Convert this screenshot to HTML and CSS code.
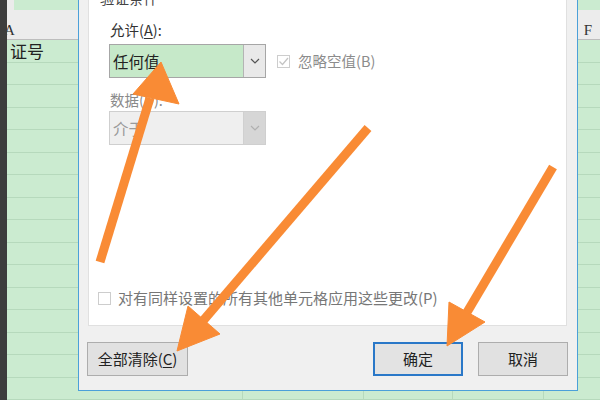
FILE: index.html
```html
<!DOCTYPE html>
<html lang="zh-CN">
<head>
<meta charset="utf-8">
<title>数据验证</title>
<link rel="stylesheet" href="styles.css">
</head>
<body>
<div class="screen">
  <div class="strip"></div>
  <div class="sheet">
    <div class="topbar"><span class="tb-gray"></span><span class="tb-green"></span></div>
    <div class="colhead"><span class="col-a">A</span><span class="col-f">F</span></div>
    <div class="rows">
      <div class="row"><span class="cell-text">证号</span></div>
      <div class="row"></div><div class="row"></div><div class="row"></div>
      <div class="row"></div><div class="row"></div><div class="row"></div>
      <div class="row"></div><div class="row"></div><div class="row"></div>
      <div class="row"></div><div class="row"></div><div class="row"></div>
      <div class="row"></div><div class="row"></div><div class="row"></div>
    </div>
  </div>

  <div class="dialog">
    <div class="panel">
      <div class="group-title">验证条件</div>
      <div class="field-label">允许(<u>A</u>):</div>
      <div class="field-row">
        <div class="select select-active">
          <span class="select-value">任何值</span>
          <span class="select-btn"><svg width="10" height="6" viewBox="0 0 10 6"><polyline points="1,1 5,5 9,1" fill="none" stroke="#555" stroke-width="1.2"/></svg></span>
        </div>
        <label class="check check-disabled">
          <span class="box"><svg width="13" height="13" viewBox="0 0 13 13"><polyline points="2.5,6.5 5.5,9.5 11,3" fill="none" stroke="#c4c4c4" stroke-width="1.3"/></svg></span>
          <span class="check-text">忽略空值(B)</span>
        </label>
      </div>
      <div class="field-label field-label-dim">数据(D):</div>
      <div class="select select-disabled">
        <span class="select-value">介于</span>
        <span class="select-btn"><svg width="10" height="6" viewBox="0 0 10 6"><polyline points="1,1 5,5 9,1" fill="none" stroke="#b0b0b0" stroke-width="1.2"/></svg></span>
      </div>
      <label class="check check-bottom">
        <span class="box"></span>
        <span class="check-text">对有同样设置的所有其他单元格应用这些更改(P)</span>
      </label>
    </div>
    <div class="buttons">
      <button class="btn btn-clear">全部清除(<u>C</u>)</button>
      <span class="spacer"></span>
      <button class="btn btn-default">确定</button>
      <button class="btn btn-cancel">取消</button>
    </div>
  </div>

  <svg class="arrows" width="600" height="400" viewBox="0 0 600 400">
    <g fill="#f98b35" stroke="#f98b35">
      <line x1="100" y1="262" x2="150" y2="98" stroke-width="9"/>
      <polygon points="161,62 133,94 179,104" stroke-width="1"/>
      <line x1="368" y1="128" x2="202" y2="322" stroke-width="9"/>
      <polygon points="177,351 188,306 220,334" stroke-width="1"/>
      <line x1="553" y1="167" x2="466" y2="314" stroke-width="9"/>
      <polygon points="447,346 449,302 485,322" stroke-width="1"/>
    </g>
  </svg>
</div>
</body>
</html>
```
FILE: styles.css
```css
html, body {
  margin: 0;
  padding: 0;
}
body {
  width: 600px;
  height: 400px;
  overflow: hidden;
  background: #cbebd0;
}
.screen {
  position: relative;
  width: 600px;
  height: 400px;
  display: flex;
  overflow: hidden;
}
.strip {
  width: 7px;
  flex: none;
  background: #3d3d3d;
}
.sheet {
  flex: 1;
  display: flex;
  flex-direction: column;
  background: #cbebd0;
}
.topbar {
  height: 10px;
  display: flex;
}
.tb-gray {
  width: 7px;
  background: #ebebeb;
}
.tb-green {
  flex: 1;
  background: #cbebd0;
}
.colhead {
  height: 29px;
  background: #ececec;
  border-bottom: 1px solid #bdbdbd;
  display: flex;
  justify-content: space-between;
  align-items: center;
  font-family: "Liberation Serif", serif;
  font-size: 15px;
  color: #333;
  overflow: hidden;
}
.col-a {
  margin-left: -3px;
  padding-top: 12px;
}
.col-f {
  margin-right: 8px;
  padding-top: 12px;
}
.rows {
  flex: 1;
  background-color: #cbebd0;
  background-image:
    linear-gradient(to right, transparent 235px, #b6d9bc 235px, #b6d9bc 236px, transparent 236px),
    linear-gradient(to right, transparent 356px, #b6d9bc 356px, #b6d9bc 357px, transparent 357px),
    linear-gradient(to right, transparent 445px, #b6d9bc 445px, #b6d9bc 446px, transparent 446px),
    linear-gradient(to right, transparent 536px, #b6d9bc 536px, #b6d9bc 537px, transparent 537px);
}
.row {
  height: 21.5px;
  border-bottom: 1px solid #b6d9bc;
  display: flex;
  align-items: center;
}
.cell-text {
  margin-left: 3px;
  font-family: "Noto Sans CJK SC", sans-serif;
  font-size: 17px;
  line-height: 20px;
  color: #222;
}

/* dialog */
.dialog {
  position: absolute;
  left: 78px;
  top: -1px;
  width: 500px;
  height: 392px;
  box-sizing: border-box;
  border: 1px solid #4ba0d9;
  background: #f0f0f0;
  padding: 0 10px 0 9px;
  display: flex;
  flex-direction: column;
  font-family: "Noto Sans CJK SC", sans-serif;
  font-size: 14.5px;
  color: #333;
}
.panel {
  height: 326px;
  box-sizing: border-box;
  background: #fff;
  border: 1px solid #e0e0e0;
  border-top: none;
  display: flex;
  flex-direction: column;
}
.group-title {
  margin-top: -12px;
  margin-left: 11px;
  line-height: 20px;
  height: 20px;
  color: #444;
}
.field-label {
  margin-top: 12px;
  margin-left: 21px;
  line-height: 20px;
  height: 20px;
  color: #333;
}
.field-label u, .btn u {
  text-decoration: underline;
  text-underline-offset: 2px;
}
.field-label-dim {
  color: #8a8a8a;
  margin-top: 12px;
}
.field-row {
  margin-top: 4px;
  display: flex;
  align-items: center;
}
.select {
  margin-left: 20px;
  width: 157px;
  height: 34px;
  box-sizing: border-box;
  display: flex;
  flex: none;
}
.select-active {
  border: 1px solid #a6a6a6;
  background: #c6e9c9;
}
.select-disabled {
  margin-top: 1px;
  border: 1px solid #cfcfcf;
  background: #efefef;
}
.select-value {
  flex: 1;
  padding-left: 3px;
  line-height: 32px;
  font-size: 15.5px;
  color: #222;
}
.select-disabled .select-value {
  color: #9a9a9a;
}
.select-btn {
  width: 21px;
  display: flex;
  align-items: center;
  justify-content: center;
  border-left: 1px solid #b4b4b4;
  background: #e9e9e9;
}
.select-disabled .select-btn {
  border-left: 1px solid #d0d0d0;
  background: #d6d6d6;
}
.check {
  display: flex;
  align-items: center;
}
.box {
  width: 13px;
  height: 13px;
  box-sizing: border-box;
  border: 1px solid #cdcdcd;
  background: #fff;
  display: flex;
  flex: none;
}
.box svg {
  margin: -1px;
}
.check-disabled {
  margin-left: 11px;
}
.check-text {
  margin-left: 8px;
  line-height: 20px;
  color: #8c8c8c;
}
.check-bottom {
  margin-top: auto;
  margin-bottom: 17px;
  margin-left: 9px;
}
.check-bottom .check-text {
  margin-left: 7px;
  color: #777;
  font-size: 15px;
}

.buttons {
  margin-top: 16px;
  height: 34px;
  display: flex;
  margin-left: -1px;
  margin-right: -1px;
}
.spacer {
  flex: 1;
}
.btn {
  font-family: "Noto Sans CJK SC", sans-serif;
  font-size: 15px;
  color: #222;
  height: 34px;
  box-sizing: border-box;
  border: 1px solid #adadad;
  background: #e1e1e1;
  padding: 0;
  line-height: 30px;
}
.btn-clear {
  width: 101px;
}
.btn-default {
  width: 90px;
  border: 2px solid #2a78c8;
  background: #e3e3e3;
}
.btn-cancel {
  width: 90px;
  margin-left: 15px;
}

.arrows {
  position: absolute;
  left: 0;
  top: 0;
  pointer-events: none;
}
```
